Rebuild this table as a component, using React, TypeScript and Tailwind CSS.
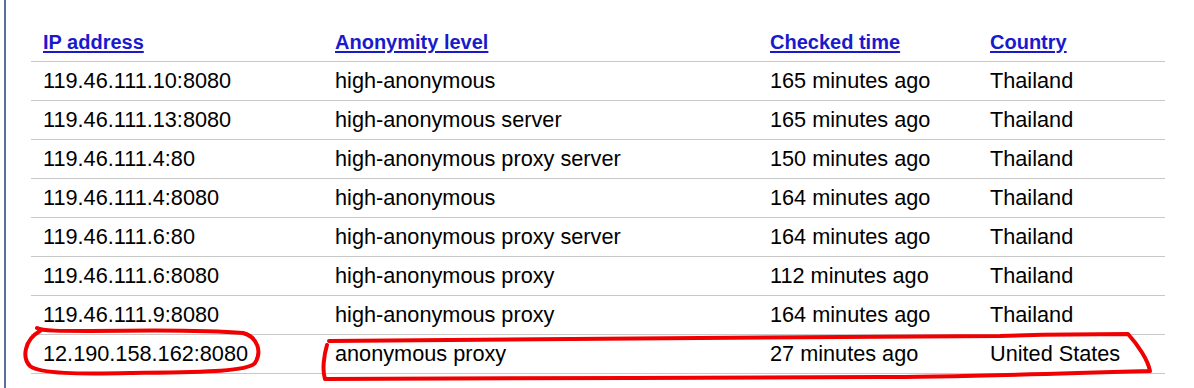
import React from "react";

const rows: [string, string, string, string][] = [
  ["119.46.111.10:8080", "high-anonymous", "165 minutes ago", "Thailand"],
  ["119.46.111.13:8080", "high-anonymous server", "165 minutes ago", "Thailand"],
  ["119.46.111.4:80", "high-anonymous proxy server", "150 minutes ago", "Thailand"],
  ["119.46.111.4:8080", "high-anonymous", "164 minutes ago", "Thailand"],
  ["119.46.111.6:80", "high-anonymous proxy server", "164 minutes ago", "Thailand"],
  ["119.46.111.6:8080", "high-anonymous proxy", "112 minutes ago", "Thailand"],
  ["119.46.111.9:8080", "high-anonymous proxy", "164 minutes ago", "Thailand"],
  ["12.190.158.162:8080", "anonymous proxy", "27 minutes ago", "United States"],
];

const headers = ["IP address", "Anonymity level", "Checked time", "Country"];

export default function App() {
  return (
    <div
      className="relative w-[1194px] h-[388px] bg-white overflow-hidden flex"
      style={{ fontFamily: '"Liberation Sans", Arial, sans-serif' }}
    >
      <div className="ml-[4px] w-[2px] h-full bg-[#5a709a]" />
      <div className="ml-[25px] w-[1134px] pt-[24px]">
        <div className="grid grid-cols-[292px_435px_220px_187px] h-[38px] border-b border-[#c8c8c8] items-center">
          {headers.map((h) => (
            <div key={h} className="pl-[12px] pt-[3px]">
              <a
                href="#"
                className="text-[20px] font-bold text-[#1a1acc] underline underline-offset-[2px] leading-none"
              >
                {h}
              </a>
            </div>
          ))}
        </div>
        {rows.map((r, i) => (
          <div
            key={i}
            className="grid grid-cols-[292px_435px_220px_187px] h-[39px] border-b border-[#c8c8c8] items-center text-[21.7px] text-black leading-none"
          >
            {r.map((c, j) => (
              <div key={j} className="pl-[12px] whitespace-nowrap">
                {c}
              </div>
            ))}
          </div>
        ))}
      </div>
      <svg
        className="absolute inset-0 pointer-events-none"
        width="1194"
        height="388"
        viewBox="0 0 1194 388"
      >
        <path
          d="M 37 328 C 42 331, 60 331, 90 331 C 150 330, 210 330, 243 333 C 258 337, 262 352, 255 363 C 248 372, 200 372, 130 373 C 80 374, 40 374, 30 366 C 22 358, 24 340, 40 331"
          fill="none"
          stroke="#f00000"
          strokeWidth="4"
          strokeLinecap="round"
          strokeLinejoin="round"
        />
        <path
          d="M 329 341 C 500 338, 800 338, 1000 336 C 1060 334, 1100 334, 1128 334 C 1138 345, 1148 360, 1150 371 C 1050 374, 950 377, 880 377 C 700 378, 500 378, 325 379 C 322 370, 324 355, 327 345"
          fill="none"
          stroke="#f00000"
          strokeWidth="4"
          strokeLinecap="round"
          strokeLinejoin="round"
        />
      </svg>
    </div>
  );
}
